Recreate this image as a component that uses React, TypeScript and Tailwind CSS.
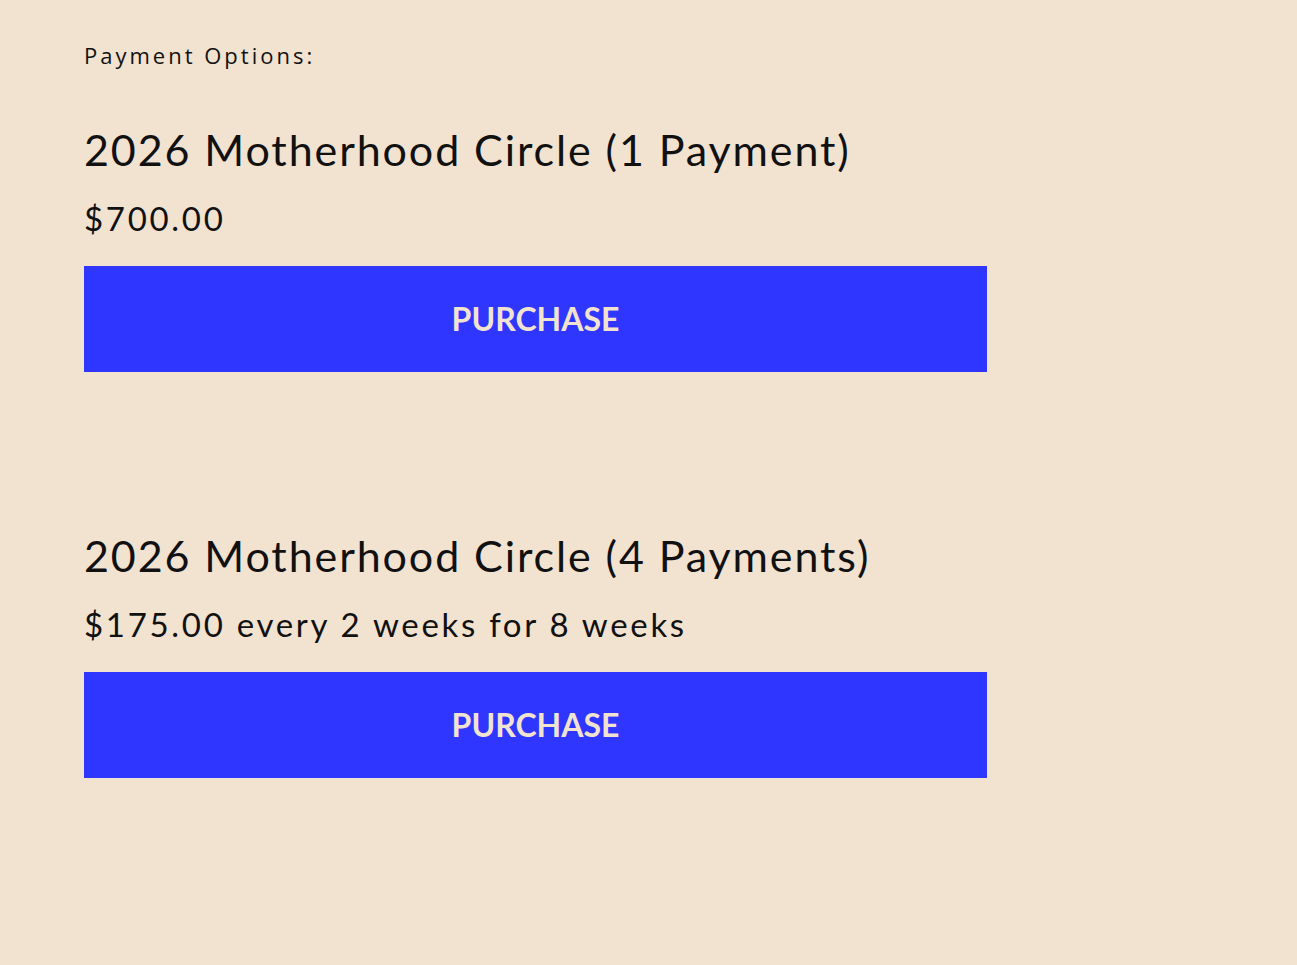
export default function App() {
  const items = [
    { title: "2026 Motherhood Circle (1 Payment)", price: "$700.00" },
    { title: "2026 Motherhood Circle (4 Payments)", price: "$175.00 every 2 weeks for 8 weeks" },
  ];
  return (
    <div className="min-h-[965px] w-full bg-[#f2e2d0] pl-[84px] pt-[40px]">
      <div className="w-[903px]">
        <p className="text-[22px] leading-[30px] tracking-[3px] text-[#111] font-medium font-['Open_Sans',sans-serif]">
          Payment Options:
        </p>
        <div className="flex flex-col gap-[156px] mt-[52px]">
          {items.map((it) => (
            <div key={it.title} className="flex flex-col">
              <h2 className="text-[43px] leading-[56px] tracking-[1.9px] text-[#111] font-['Lato',sans-serif] font-normal">
                {it.title}
              </h2>
              <p className="mt-[18px] text-[33px] leading-[44px] tracking-[2.7px] text-[#111] font-['Lato',sans-serif]">
                {it.price}
              </p>
              <button className="mt-[26px] h-[106px] w-full bg-[#2e36ff] text-[#f2e2d0] text-[32px] font-bold font-['Lato',sans-serif] tracking-[0px]">
                PURCHASE
              </button>
            </div>
          ))}
        </div>
      </div>
    </div>
  );
}
